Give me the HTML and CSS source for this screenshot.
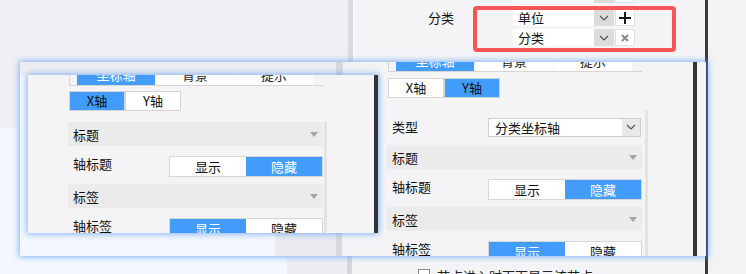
FILE: index.html
```html
<!DOCTYPE html>
<html lang="zh">
<head>
    <meta charset="UTF-8">
    <title>坐标轴设置</title>
    <link rel="stylesheet" href="styles.css">
</head>
<body>

    <!-- Desktop backdrop -->
    <div class="bg-top"></div>
    <div class="bg-bottom"></div>

    <!-- Top form panel -->
    <section class="panel-top">
        <div class="field field-prev">
            <span class="field-label"></span>
            <div class="pick-list">
                <div class="pick-row">
                    <div class="select"><span class="select-text"></span><span class="select-arrow"><svg width="10" height="6" viewBox="0 0 10 6"><polyline points="1,1 5,5 9,1" fill="none" stroke="#555" stroke-width="1.2"/></svg></span></div>
                    <span class="pick-btn"></span>
                </div>
            </div>
        </div>
        <div class="field">
            <span class="field-label">分类</span>
            <div class="pick-list">
                <div class="pick-row">
                    <div class="select"><span class="select-text">单位</span><span class="select-arrow"><svg width="10" height="6" viewBox="0 0 10 6"><polyline points="1,1 5,5 9,1" fill="none" stroke="#555" stroke-width="1.2"/></svg></span></div>
                    <span class="pick-btn"><svg width="12" height="12" viewBox="0 0 12 12"><path d="M6 0V12M0 6H12" stroke="#1a1a1a" stroke-width="2"/></svg></span>
                </div>
                <div class="pick-row">
                    <div class="select"><span class="select-text">分类</span><span class="select-arrow"><svg width="10" height="6" viewBox="0 0 10 6"><polyline points="1,1 5,5 9,1" fill="none" stroke="#555" stroke-width="1.2"/></svg></span></div>
                    <span class="pick-btn"><svg width="8" height="8" viewBox="0 0 8 8"><path d="M1 1L7 7M7 1L1 7" stroke="#8a8a8a" stroke-width="2"/></svg></span>
                </div>
            </div>
        </div>
        <div class="red-mark"></div>
        <div class="check-row"><span class="check-box"></span>节点进入时下面显示该节点</div>
    </section>

    <!-- Large window: axis panel (Y axis) -->
    <section class="win-big">
        <div class="shot-left">
            <div class="band-top"></div>
            <div class="band-mid"></div>
            <div class="band-bottom"></div>
        </div>
        <div class="shot-right">
            <div class="settings settings-y">
                <div class="tabs">
                    <span class="tab active">坐标轴</span>
                    <span class="tab">背景</span>
                    <span class="tab">提示</span>
                </div>
                <div class="axis-switch">
                    <span class="axis-btn">X轴</span>
                    <span class="axis-btn active">Y轴</span>
                </div>
                <div class="type-row">
                    <span class="prop-label">类型</span>
                    <div class="type-select">
                        <span class="select-text">分类坐标轴</span>
                        <span class="type-arrow"><svg width="10" height="6" viewBox="0 0 10 6"><polyline points="1,1 5,5 9,1" fill="none" stroke="#555" stroke-width="1.2"/></svg></span>
                    </div>
                </div>
                <div class="section-head">标题<span class="caret"></span></div>
                <div class="prop-row">
                    <span class="prop-label">轴标题</span>
                    <div class="toggle"><span>显示</span><span class="on">隐藏</span></div>
                </div>
                <div class="section-head">标签<span class="caret"></span></div>
                <div class="prop-row">
                    <span class="prop-label">轴标签</span>
                    <div class="toggle"><span class="on">显示</span><span>隐藏</span></div>
                </div>
            </div>
            <div class="scroll-track scroll-y"></div>
            <div class="spacer"></div>
            <div class="dark-bar"></div>
            <div class="edge"></div>
        </div>
    </section>

    <!-- Small window: axis panel (X axis) -->
    <section class="win-small">
        <div class="settings settings-x">
            <div class="tabs">
                <span class="tab active">坐标轴</span>
                <span class="tab">背景</span>
                <span class="tab">提示</span>
            </div>
            <div class="axis-switch">
                <span class="axis-btn active">X轴</span>
                <span class="axis-btn">Y轴</span>
            </div>
            <div class="section-head">标题<span class="caret"></span></div>
            <div class="prop-row">
                <span class="prop-label">轴标题</span>
                <div class="toggle"><span>显示</span><span class="on">隐藏</span></div>
            </div>
            <div class="section-head">标签<span class="caret"></span></div>
            <div class="prop-row">
                <span class="prop-label">轴标签</span>
                <div class="toggle"><span class="on">显示</span><span>隐藏</span></div>
            </div>
        </div>
        <div class="scroll-track scroll-x"></div>
    </section>

</body>
</html>
```

FILE: styles.css
```css
* {
    box-sizing: border-box;
}

body {
    margin: 0;
    width: 746px;
    height: 274px;
    overflow: hidden;
    position: relative;
    background-color: #f2f3f3;
    font-family: "Noto Sans CJK SC", "Noto Sans", sans-serif;
    font-size: 13px;
    color: #111;
}

/* Backdrop behind the windows */
.bg-top {
    position: absolute;
    left: 0;
    top: 0;
    width: 357px;
    height: 128px;
    background: linear-gradient(to right, #eff0f3 0 348px, #dadbdf 348px 353px, #f7f7f9 353px);
}

.bg-bottom {
    position: absolute;
    left: 0;
    top: 128px;
    width: 357px;
    height: 146px;
    background: linear-gradient(to right, #f4f7fe 0 287px, #eceef2 287px 347px, #d6d7da 347px 352px, #f3f4f6 352px);
}

/* Top form panel */
.panel-top {
    position: absolute;
    left: 357px;
    top: 0;
    width: 351px;
    height: 274px;
    background-color: #f4f4f6;
    border-right: 3px solid #3b3b3b;
    display: flex;
    flex-direction: column;
    overflow: hidden;
}

.panel-top > * {
    flex-shrink: 0;
}

.field {
    display: flex;
    padding-left: 71px;
    margin-top: 6px;
}

.field-prev {
    margin-top: -14px;
}

.field-label {
    width: 85px;
    line-height: 17px;
}

.pick-list {
    display: flex;
    flex-direction: column;
    gap: 3px;
}

.pick-row {
    display: flex;
    gap: 1px;
    height: 17px;
}

.select {
    width: 101px;
    display: flex;
    background-color: #fff;
}

.select-text {
    flex: 1;
    padding-left: 5px;
    line-height: 17px;
}

.select-arrow {
    width: 20px;
    background-color: #dcdcdc;
    display: flex;
    align-items: center;
    justify-content: center;
}

.pick-btn {
    width: 20px;
    background-color: #fff;
    border: 1px solid #e2e2e2;
    display: flex;
    align-items: center;
    justify-content: center;
}

/* Highlight box drawn over the form */
.red-mark {
    position: absolute;
    left: 116px;
    top: 6px;
    width: 203px;
    height: 46px;
    border: 4px solid #f65656;
    border-radius: 4px;
}

.check-row {
    margin-top: auto;
    margin-bottom: -9px;
    padding-left: 61px;
    display: flex;
    align-items: center;
    gap: 7px;
    height: 16px;
    font-size: 13px;
    color: #222;
}

.check-box {
    width: 12px;
    height: 12px;
    background-color: #fff;
    border: 1px solid #8a8a8a;
}

/* Large window */
.win-big {
    position: absolute;
    left: 20px;
    top: 62px;
    width: 687px;
    height: 194px;
    display: flex;
    overflow: hidden;
    border-right: 1px solid #2e4f86;
    box-shadow: 0 0 6px 1px rgba(90, 155, 245, 0.75);
}

.shot-left {
    width: 360px;
    display: flex;
    flex-direction: column;
}

.band-top {
    height: 13px;
    background: linear-gradient(to right, #ecedf1 0 316px, #d6d7da 316px 323px, #f1f2f4 323px);
}

.band-mid {
    flex: 1;
    background-color: #f3f6fd;
}

.band-bottom {
    height: 23px;
    background: linear-gradient(to right, #f4f7fe 0 255px, #e9eaee 255px 316px, #d8d9dc 316px 322px, #f3f4f6 322px);
}

.shot-right {
    flex: 1;
    display: flex;
    padding-left: 7px;
    background-color: #f4f4f6;
}

.spacer {
    flex: 1;
}

.dark-bar {
    width: 4px;
    background-color: #353535;
}

.edge {
    width: 9px;
    background-color: #f3f4f4;
}

/* Small window */
.win-small {
    position: absolute;
    left: 28px;
    top: 75px;
    width: 350px;
    height: 158px;
    display: flex;
    padding-left: 40px;
    overflow: hidden;
    background-color: #f4f4f6;
    border-right: 4px solid #333;
    box-shadow: 0 0 6px 1px rgba(90, 155, 245, 0.75);
}

/* Axis settings panel */
.settings {
    width: 255px;
    flex-shrink: 0;
    display: flex;
    flex-direction: column;
}

.settings > * {
    flex-shrink: 0;
}

.tabs {
    display: flex;
    gap: 1px;
    margin-left: 1px;
    padding-left: 7px;
    border-left: 1px solid #d6d6d6;
    border-bottom: 1px solid #d6d6d6;
}

.settings-x .tabs {
    margin-top: -10px;
}

.settings-y .tabs {
    margin-top: -11px;
}

.tab {
    width: 78px;
    height: 20px;
    line-height: 20px;
    text-align: center;
    background-color: #fff;
    color: #222;
}

.tab.active {
    background-color: #429dfa;
    color: #fff;
}

.axis-switch {
    display: flex;
    margin-left: 1px;
    margin-top: 5px;
}

.settings-y .axis-switch {
    margin-top: 6px;
}

.axis-btn {
    width: 56px;
    height: 20px;
    line-height: 18px;
    text-align: center;
    background-color: #fff;
    border: 1px solid #d4d4d4;
}

.axis-btn.active {
    background-color: #429dfa;
    border-color: #d4d4d4;
}

.type-row {
    display: flex;
    align-items: center;
    height: 36px;
    margin-top: 11px;
}

.type-select {
    width: 153px;
    height: 19px;
    display: flex;
    background-color: #fff;
    border: 1px solid #d0d0d0;
}

.type-select .select-text {
    padding-left: 6px;
    line-height: 17px;
}

.type-arrow {
    width: 18px;
    background-color: #e8e8e8;
    display: flex;
    align-items: center;
    justify-content: center;
}

.section-head {
    height: 24px;
    padding: 0 5px;
    display: flex;
    align-items: center;
    justify-content: space-between;
    background-color: #ebebeb;
}

.settings-x .axis-switch + .section-head {
    margin-top: 11px;
}

.caret {
    width: 0;
    height: 0;
    border-left: 4.5px solid transparent;
    border-right: 4.5px solid transparent;
    border-top: 5px solid #a5a5a5;
}

.prop-row {
    height: 38px;
    display: flex;
    padding-top: 10px;
}

.prop-label {
    width: 101px;
    padding-left: 5px;
    line-height: 16px;
}

.toggle {
    width: 154px;
    height: 21px;
    display: flex;
    border: 1px solid #d6d6d6;
    background-color: #fff;
}

.toggle span {
    flex: 1;
    text-align: center;
    line-height: 19px;
    color: #111;
}

.toggle span.on {
    background-color: #429dfa;
    color: #fff;
}

.scroll-track {
    width: 3px;
    background-color: #e3e3e3;
}

.scroll-x {
    margin-left: 1px;
    margin-top: 47px;
}

.scroll-y {
    margin-left: 3px;
    margin-top: 48px;
}
```
